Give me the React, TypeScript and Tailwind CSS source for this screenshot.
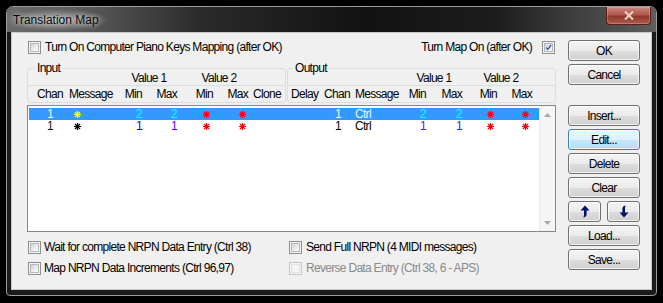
import React from "react";

const Star = ({ color }: { color: string }) => (
  <svg width="7" height="7" viewBox="0 0 7 7" className="block shrink-0">
    <g stroke={color} strokeWidth="1.2">
      <line x1="3.5" y1="0" x2="3.5" y2="7" />
      <line x1="0" y1="3.5" x2="7" y2="3.5" />
      <line x1="1" y1="1" x2="6" y2="6" />
      <line x1="6" y1="1" x2="1" y2="6" />
    </g>
  </svg>
);

function Check({ checked = false, disabled = false }: { checked?: boolean; disabled?: boolean }) {
  return (
    <span
      className={`flex h-[13px] w-[13px] shrink-0 items-center justify-center border ${
        disabled ? "border-[#c6c6c6] bg-[#f4f4f4]" : "border-[#8e8f8f] bg-[#f4f4f4]"
      }`}
    >
      <span
        className={`flex h-[9px] w-[9px] items-center justify-center border ${
          disabled
            ? "border-[#e0e0e0] bg-[#f4f4f4]"
            : "border-[#b4b7bb] bg-[linear-gradient(135deg,#d2d5d9_0%,#eceef0_60%,#fbfbfb_100%)]"
        }`}
      >
        {checked && (
          <svg width="9" height="9" viewBox="0 0 9 9" className="block">
            <path d="M1.5 4.5 L3.6 7 L7.8 1.3" fill="none" stroke="#3d5a9c" strokeWidth="1.7" />
          </svg>
        )}
      </span>
    </span>
  );
}

function Btn({ children, focused = false, className = "" }: { children: React.ReactNode; focused?: boolean; className?: string }) {
  return (
    <div
      className={`flex h-[21px] items-center justify-center rounded-[3px] border ${
        focused
          ? "border-[#3c7fb1] bg-[linear-gradient(#ecf7fd_0%,#dcf1fc_50%,#c6e8fa_51%,#b3dcf3_100%)]"
          : "border-[#707070] bg-[linear-gradient(#f3f3f3_0%,#ebebeb_50%,#dddddd_51%,#cfcfcf_100%)]"
      } shadow-[inset_0_0_0_1px_rgba(255,255,255,0.75)] ${className}`}
    >
      {children}
    </div>
  );
}

const UpArrow = ({ down = false }: { down?: boolean }) => (
  <svg width="10" height="13" viewBox="0 0 10 13" className="block">
    <path
      d="M5 0.5 L9.5 5.5 L6.6 5.5 L6.6 9 C6.6 10.8 5.7 12 3.7 12.6 L3.3 12 C4 11.4 4 10.6 4 9.6 L4 5.5 L0.5 5.5 Z"
      fill="#00106e"
      transform={down ? "rotate(180 5 6.5)" : undefined}
    />
  </svg>
);

type Row = {
  sel: boolean;
  inChan: [string, string];
  msgStar: string;
  v1min: [string, string];
  v1max: [string, string];
  outChan: [string, string];
  ctrl: string;
  o1min: [string, string];
  o1max: [string, string];
};

const rows: Row[] = [
  {
    sel: true,
    inChan: ["1", "#f4f4ff"],
    msgStar: "#ffff00",
    v1min: ["2", "#00ffff"],
    v1max: ["2", "#00ffff"],
    outChan: ["1", "#f4f4ff"],
    ctrl: "#e6f6ff",
    o1min: ["2", "#00ffff"],
    o1max: ["2", "#00ffff"],
  },
  {
    sel: false,
    inChan: ["1", "#1a1a00"],
    msgStar: "#000000",
    v1min: ["1", "#0000ff"],
    v1max: ["1", "#5a00ff"],
    outChan: ["1", "#000000"],
    ctrl: "#000000",
    o1min: ["1", "#6a10ff"],
    o1max: ["1", "#1030ff"],
  },
];

function DataRow({ r }: { r: Row }) {
  return (
    <div className={`flex h-[12px] w-[510px] items-center leading-[12px] ${r.sel ? "bg-[#3399ff]" : ""}`}>
      <div className="w-[24px] shrink-0 text-right" style={{ color: r.inChan[1] }}>{r.inChan[0]}</div>
      <div className="flex w-[32px] shrink-0 pl-[21px]"><Star color={r.msgStar} /></div>
      <div className="w-[57px] shrink-0 text-right" style={{ color: r.v1min[1] }}>{r.v1min[0]}</div>
      <div className="w-[35px] shrink-0 text-right" style={{ color: r.v1max[1] }}>{r.v1max[0]}</div>
      <div className="flex w-[36px] shrink-0 justify-end pr-[3px]"><Star color="#ff0000" /></div>
      <div className="flex w-[35px] shrink-0 justify-end pr-[2px]"><Star color="#ff0000" /></div>
      <div className="w-[93px] shrink-0 text-right" style={{ color: r.outChan[1] }}>{r.outChan[0]}</div>
      <div className="w-[63px] shrink-0 pl-[14px]" style={{ color: r.ctrl }}>Ctrl</div>
      <div className="w-[22px] shrink-0 text-right" style={{ color: r.o1min[1] }}>{r.o1min[0]}</div>
      <div className="w-[36px] shrink-0 text-right" style={{ color: r.o1max[1] }}>{r.o1max[0]}</div>
      <div className="flex w-[35px] shrink-0 justify-end pr-[3px]"><Star color="#ff0000" /></div>
      <div className="flex w-[35px] shrink-0 justify-end pr-[3px]"><Star color="#ff0000" /></div>
    </div>
  );
}

export default function App() {
  return (
    <div className="h-[303px] w-[663px] overflow-hidden bg-black pl-[6px] pt-[6px] font-['Liberation_Sans',Arial,sans-serif] text-[12px] leading-[14px] tracking-[-0.7px] text-black">
      <div className="flex h-[290px] w-[651px] flex-col overflow-hidden rounded-t-[7px] rounded-b-[4px] border border-[#9c9c9c] bg-[#1b1b1b]">
        {/* Title bar */}
        <div className="flex h-[25px] shrink-0 items-start justify-between bg-[linear-gradient(90deg,#6b6b6b_0%,#5a5a5a_12%,#2a2a2a_30%,#121212_55%,#1c1c1c_75%,#454545_90%,#5e5e5e_100%)]">
          <span className="ml-[-4px] mt-[2px] rounded-[10px] bg-[radial-gradient(closest-side,rgba(200,200,200,0.75),rgba(160,160,160,0.35)_70%,transparent)] px-[10px] pt-[4px] pb-[4px] tracking-normal text-[#0a0a0a] [text-shadow:0_0_5px_rgba(255,255,255,0.9)]">
            Translation Map
          </span>
          <div className="mr-[5px] flex h-[18px] w-[45px] items-center justify-center rounded-b-[4px] rounded-t-[1px] border border-t-0 border-[#5b1e18] bg-[linear-gradient(#c98a80_0%,#b1574b_45%,#94372c_55%,#a95a4f_100%)] shadow-[inset_0_0_0_1px_rgba(255,200,190,0.3)]">
            <svg width="10" height="9" viewBox="0 0 10 9" className="block">
              <g stroke="#f2d2cc" strokeWidth="2">
                <line x1="1" y1="0.5" x2="9" y2="8.5" />
                <line x1="9" y1="0.5" x2="1" y2="8.5" />
              </g>
            </svg>
          </div>
        </div>

        {/* Client */}
        <div className="mx-[4px] mb-[5px] flex h-[258px] border border-[#c9c9c9] bg-[#f0f0f0]">
          {/* Left column */}
          <div className="ml-[15px] flex w-[529px] shrink-0 flex-col">
            <div className="mt-[8px] flex h-[13px] items-center justify-between pl-px pr-px leading-[13px]">
              <div className="flex items-center gap-[4px]">
                <Check />
                <span className="whitespace-nowrap">Turn On Computer Piano Keys Mapping (after OK)</span>
              </div>
              <div className="flex items-center gap-[10px]">
                <span className="whitespace-nowrap">Turn Map On (after OK)</span>
                <Check checked />
              </div>
            </div>

            {/* Column header groups */}
            <div className="mt-[7px] flex gap-px">
              <fieldset className="w-[259px] shrink-0 rounded-[3px] border border-[#d5dfe5]">
                <legend className="ml-[7px] px-[2px] leading-[14px]">Input</legend>
                <div className="-mt-[3px] flex h-[13px] leading-[13px]">
                  <div className="w-[90px] shrink-0" />
                  <div className="w-[62px] shrink-0 text-center">Value 1</div>
                  <div className="w-[78px] shrink-0 text-center">Value 2</div>
                </div>
                <div className="h-px bg-[#d5dfe5]" />
                <div className="flex h-[16px] items-center">
                  <div className="w-[38px] shrink-0 pl-[9px]">Chan</div>
                  <div className="w-[52px] shrink-0 pl-[3px]">Message</div>
                  <div className="w-[24px] shrink-0 text-right">Min</div>
                  <div className="w-[35px] shrink-0 text-right">Max</div>
                  <div className="w-[36px] shrink-0 text-right">Min</div>
                  <div className="w-[35px] shrink-0 text-right">Max</div>
                  <div className="w-[37px] shrink-0 pl-[5px]">Clone</div>
                </div>
              </fieldset>
              <fieldset className="w-[269px] shrink-0 rounded-[3px] border border-[#d5dfe5]">
                <legend className="ml-[5px] px-[2px] leading-[14px]">Output</legend>
                <div className="-mt-[3px] flex h-[13px] leading-[13px]">
                  <div className="w-[116px] shrink-0" />
                  <div className="w-[60px] shrink-0 text-center">Value 1</div>
                  <div className="w-[74px] shrink-0 text-center">Value 2</div>
                </div>
                <div className="h-px bg-[#d5dfe5]" />
                <div className="flex h-[16px] items-center">
                  <div className="w-[33px] shrink-0 pl-[3px]">Delay</div>
                  <div className="w-[29px] shrink-0 text-right">Chan</div>
                  <div className="w-[54px] shrink-0 pl-[5px]">Message</div>
                  <div className="w-[22px] shrink-0 text-right">Min</div>
                  <div className="w-[36px] shrink-0 text-right">Max</div>
                  <div className="w-[35px] shrink-0 text-right">Min</div>
                  <div className="w-[35px] shrink-0 text-right">Max</div>
                </div>
              </fieldset>
            </div>

            {/* List */}
            <div className="mt-[2px] flex h-[127px] border border-[#828790] bg-white">
              <div className="flex-1 pl-px pt-[2px]">
                {rows.map((r, i) => (
                  <DataRow key={i} r={r} />
                ))}
              </div>
              <div className="flex w-[16px] shrink-0 flex-col justify-between border-l border-[#e9e9e9] bg-[#f5f5f5]">
                <div className="flex h-[17px] items-center justify-center">
                  <svg width="7" height="4" viewBox="0 0 7 4" className="block">
                    <polygon points="0,4 3.5,0 7,4" fill="#a8a8a8" />
                  </svg>
                </div>
                <div className="flex h-[17px] items-center justify-center">
                  <svg width="7" height="4" viewBox="0 0 7 4" className="block">
                    <polygon points="0,0 3.5,4 7,0" fill="#a8a8a8" />
                  </svg>
                </div>
              </div>
            </div>

            {/* Bottom options */}
            <div className="mt-[9px] flex h-[13px] items-center pl-px leading-[13px]">
              <div className="flex w-[261px] shrink-0 items-center gap-[3px]">
                <Check />
                <span className="whitespace-nowrap">Wait for complete NRPN Data Entry (Ctrl 38)</span>
              </div>
              <div className="flex items-center gap-[4px]">
                <Check />
                <span className="whitespace-nowrap">Send Full NRPN (4 MIDI messages)</span>
              </div>
            </div>
            <div className="mt-[8px] flex h-[13px] items-center pl-px leading-[13px]">
              <div className="flex w-[261px] shrink-0 items-center gap-[3px]">
                <Check />
                <span className="whitespace-nowrap">Map NRPN Data Increments (Ctrl 96,97)</span>
              </div>
              <div className="flex items-center gap-[4px]">
                <Check disabled />
                <span className="whitespace-nowrap text-[#8a8a8a]">Reverse Data Entry (Ctrl 38, 6 - APS)</span>
              </div>
            </div>
          </div>

          {/* Buttons */}
          <div className="ml-[12px] mt-[7px] flex w-[72px] shrink-0 flex-col gap-[3px]">
            <Btn>OK</Btn>
            <Btn>Cancel</Btn>
            <Btn className="mt-[17px]">Insert...</Btn>
            <Btn focused>Edit...</Btn>
            <Btn>Delete</Btn>
            <Btn>Clear</Btn>
            <div className="flex gap-[6px]">
              <Btn className="w-[33px]"><UpArrow /></Btn>
              <Btn className="w-[33px]"><UpArrow down /></Btn>
            </div>
            <Btn>Load...</Btn>
            <Btn>Save...</Btn>
          </div>
        </div>
      </div>
    </div>
  );
}
